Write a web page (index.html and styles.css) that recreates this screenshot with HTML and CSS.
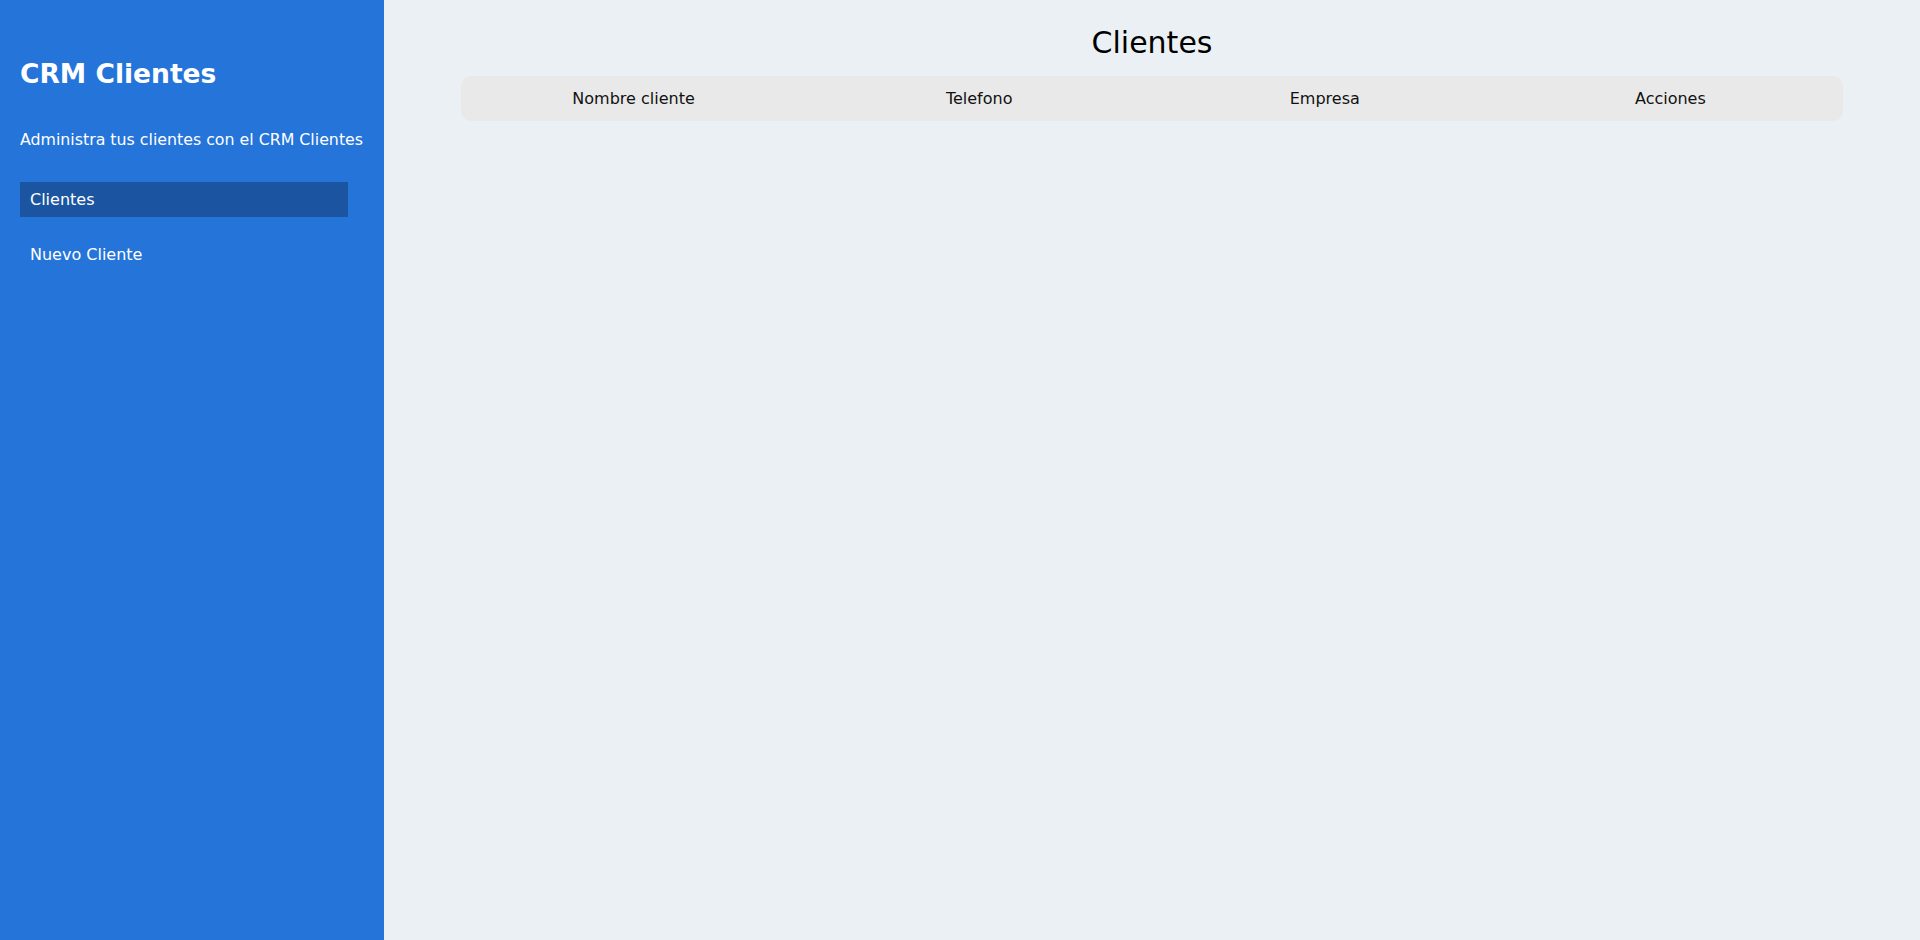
FILE: index.html
```html
<!DOCTYPE html>
<html lang="es">
<head>
<meta charset="utf-8">
<title>CRM Clientes</title>
<link rel="stylesheet" href="styles.css">
</head>
<body>
<div class="layout">
  <aside class="sidebar">
    <h2 class="brand">CRM Clientes</h2>
    <p class="tagline">Administra tus clientes con el CRM Clientes</p>
    <nav class="nav">
      <a class="nav-link active" href="#">Clientes</a>
      <a class="nav-link" href="#">Nuevo Cliente</a>
    </nav>
  </aside>
  <main class="main">
    <h1 class="page-title">Clientes</h1>
    <table class="clients">
      <thead>
        <tr>
          <th>Nombre cliente</th>
          <th>Telefono</th>
          <th>Empresa</th>
          <th>Acciones</th>
        </tr>
      </thead>
      <tbody></tbody>
    </table>
  </main>
</div>
</body>
</html>
```
FILE: styles.css
```css
* { box-sizing: border-box; }
html, body { margin: 0; padding: 0; }
body {
  font-family: "DejaVu Sans", "Liberation Sans", sans-serif;
  font-size: 16px;
  background: #ebf0f4;
  color: #000;
}
.layout {
  display: flex;
  min-height: 100vh;
}
.sidebar {
  width: 384px;
  flex: 0 0 384px;
  background: #2574da;
  color: #fff;
  padding: 58px 20px 0 20px;
}
.brand {
  margin: 0;
  font-size: 26.5px;
  line-height: 32px;
  font-weight: bold;
}
.tagline {
  margin: 38px 0 0 0;
  font-size: 15.8px;
  line-height: 24px;
  white-space: nowrap;
}
.nav {
  margin-top: 29.5px;
  display: flex;
  flex-direction: column;
  gap: 20px;
}
.nav-link {
  display: block;
  width: 328px;
  padding: 5px 10px;
  line-height: 25px;
  font-size: 16px;
  color: #fff;
  text-decoration: none;
}
.nav-link.active {
  background: #1b54a0;
}
.main {
  flex: 1;
  padding-top: 25px;
}
.page-title {
  margin: 0;
  text-align: center;
  font-size: 30px;
  line-height: 36px;
  font-weight: normal;
}
.clients {
  width: 90%;
  margin: 15px auto 0 auto;
  border-collapse: separate;
  border-spacing: 0;
  table-layout: fixed;
}
.clients th {
  background: #e9e9e9;
  font-weight: normal;
  font-size: 16px;
  line-height: 25px;
  padding: 10px 0;
  text-align: center;
  color: #111;
}
.clients th:first-child { border-radius: 10px 0 0 10px; }
.clients th:last-child { border-radius: 0 10px 10px 0; }
```
